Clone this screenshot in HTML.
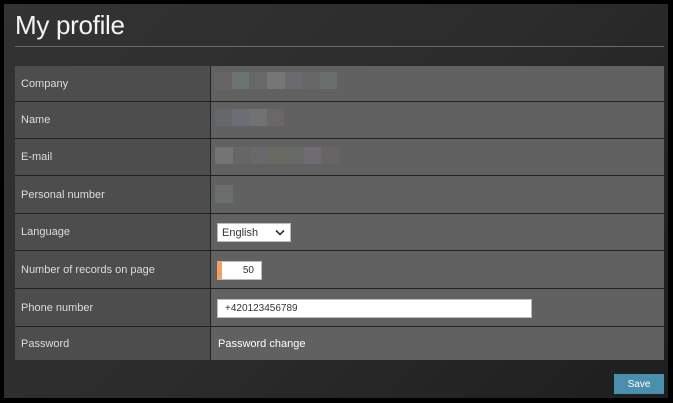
<!DOCTYPE html>
<html><head><style>
*{margin:0;padding:0;box-sizing:border-box}
body{width:673px;height:403px;background:#000;position:relative;overflow:hidden;font-family:"Liberation Sans",sans-serif}
#p{position:absolute;left:4px;top:4px;width:664px;height:394px;background:linear-gradient(135deg,#333 0%,#2c2c2c 50%,#1e1e1e 100%)}
h1{position:absolute;left:15px;top:10px;font-weight:normal;font-size:26px;color:#f4f4f4;letter-spacing:-0.3px}
.hr{position:absolute;left:15px;top:46px;width:649px;height:1px;background:#6a6a6a}
.t{position:absolute;left:15px;top:66px;width:649px;height:294px;background:#222}
.r{position:absolute;left:0;width:649px}
.l{position:absolute;left:0;top:0;bottom:0;width:195px;background:#4d4d4d;color:#ddd;font-size:11px;padding-left:6px;display:flex;align-items:center}
.v{position:absolute;left:196px;top:0;bottom:0;right:0;background:#616161}
.b{position:absolute;height:17px}
.in{position:absolute;background:#fff;border:1px solid #bbb;font-size:10px;color:#333}
</style></head><body>
<div id="p"></div>
<h1>My profile</h1>
<div class="hr"></div>
<div class="t">
<div class="r" style="top:0;height:35px"><div class="l">Company</div><div class="v">
<div class="b" style="left:3px;top:6px;width:18px;background:#686462"></div><div class="b" style="left:21px;top:6px;width:17px;background:#6c7473"></div><div class="b" style="left:38px;top:6px;width:18px;background:#686868"></div><div class="b" style="left:56px;top:6px;width:18px;background:#757775"></div><div class="b" style="left:74px;top:6px;width:17px;background:#6a6a72"></div><div class="b" style="left:91px;top:6px;width:18px;background:#676767"></div><div class="b" style="left:109px;top:6px;width:17px;background:#6a6f6e"></div></div></div>
<div class="r" style="top:36px;height:36px"><div class="l">Name</div><div class="v">
<div class="b" style="left:4px;top:7px;width:17px;background:#65686a"></div><div class="b" style="left:21px;top:7px;width:17px;background:#6b6e76"></div><div class="b" style="left:38px;top:7px;width:18px;background:#727273"></div><div class="b" style="left:56px;top:7px;width:17px;background:#6a6766"></div></div></div>
<div class="r" style="top:73px;height:36px"><div class="l">E-mail</div><div class="v">
<div class="b" style="left:4px;top:8px;width:18px;background:#737473"></div><div class="b" style="left:22px;top:8px;width:18px;background:#686665"></div><div class="b" style="left:40px;top:8px;width:17px;background:#67696b"></div><div class="b" style="left:57px;top:8px;width:18px;background:#68695f"></div><div class="b" style="left:75px;top:8px;width:18px;background:#676967"></div><div class="b" style="left:93px;top:8px;width:17px;background:#6e6c72"></div><div class="b" style="left:110px;top:8px;width:18px;background:#666564"></div></div></div>
<div class="r" style="top:110px;height:37px"><div class="l">Personal number</div><div class="v">
<div class="b" style="left:4px;top:9px;width:18px;height:18px;background:#6a6e6e"></div></div></div>
<div class="r" style="top:148px;height:36px"><div class="l">Language</div><div class="v">
<div class="in" style="left:6px;top:9px;width:74px;height:19px;padding:3px 4px;font-size:11px">English<svg style="position:absolute;right:5px;top:5px" width="10" height="7" viewBox="0 0 10 7"><path d="M1 1.5L5 5.5L9 1.5" stroke="#333" stroke-width="1.6" fill="none"/></svg></div></div></div>
<div class="r" style="top:185px;height:37px"><div class="l">Number of records on page</div><div class="v">
<div class="in" style="left:6px;top:10px;width:45px;height:19px;text-align:right;padding:3px 7px 0 0;border-left:5px solid #f0a060">50</div></div></div>
<div class="r" style="top:223px;height:37px"><div class="l">Phone number</div><div class="v">
<div class="in" style="left:6px;top:10px;width:315px;height:19px;padding:3px 7px">+420123456789</div></div></div>
<div class="r" style="top:261px;height:33px"><div class="l">Password</div><div class="v" style="color:#fff;font-size:11px;padding:11px 0 0 7px">Password change</div></div>
</div>
<div style="position:absolute;left:614px;top:374px;width:50px;height:20px;background:#4a8fad;color:#fff;font-size:10px;text-align:center;line-height:20px;padding-top:1px">Save</div>
</body></html>
